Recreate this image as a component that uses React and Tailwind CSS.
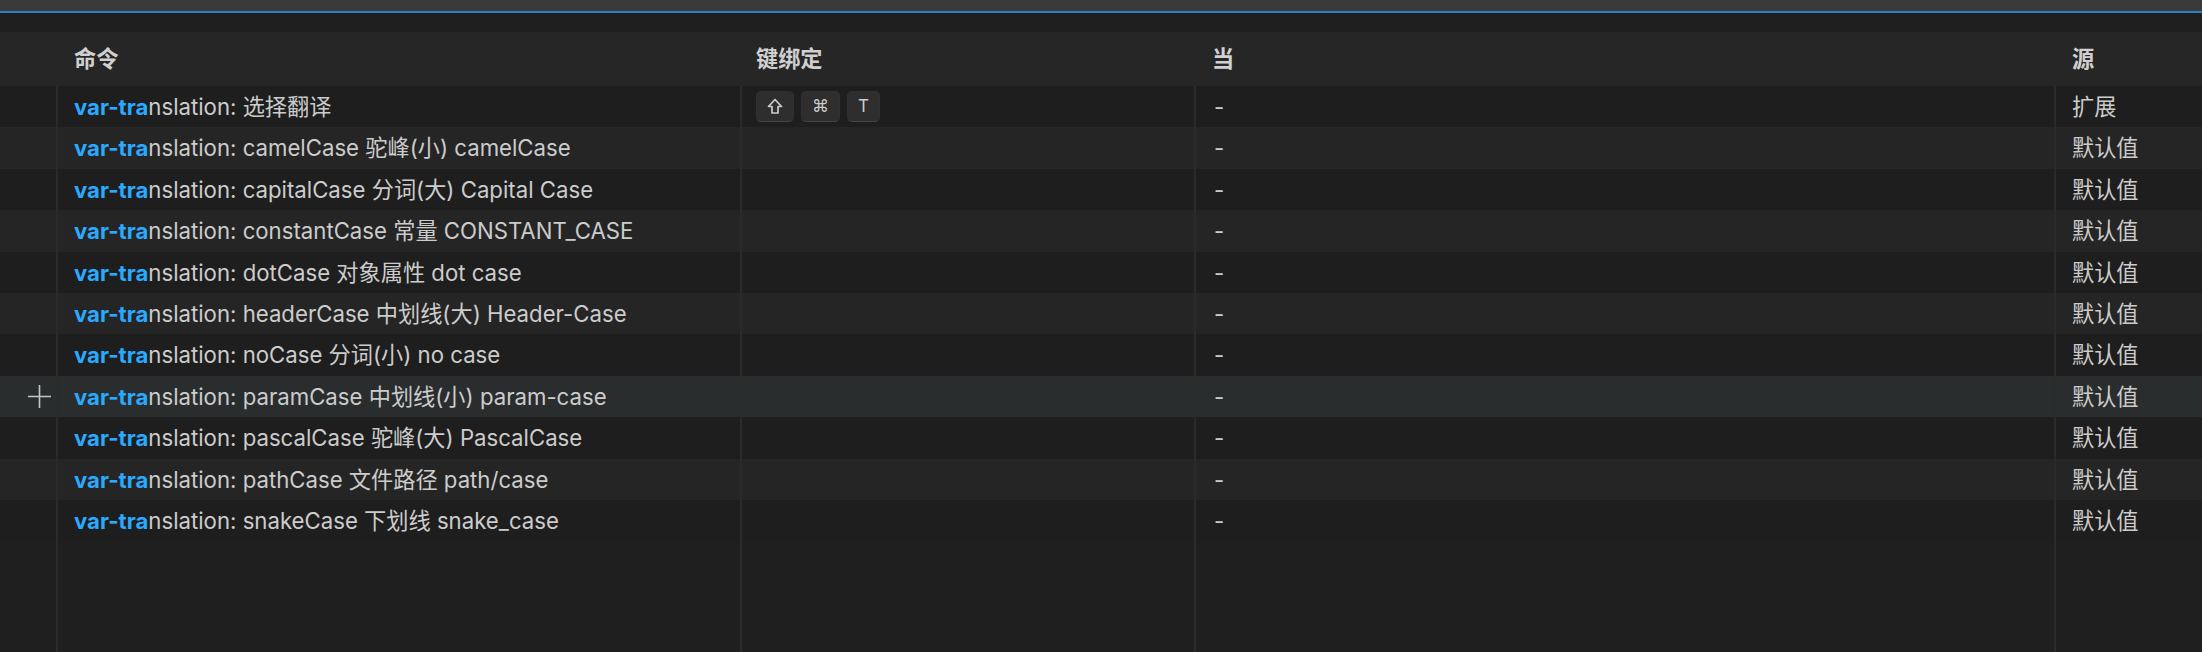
import React from "react";

const rows = [
  { rest: "nslation: 选择翻译", keys: ["shift", "⌘", "T"], source: "扩展" },
  { rest: "nslation: camelCase 驼峰(小) camelCase", source: "默认值" },
  { rest: "nslation: capitalCase 分词(大) Capital Case", source: "默认值" },
  { rest: "nslation: constantCase 常量 CONSTANT_CASE", source: "默认值" },
  { rest: "nslation: dotCase 对象属性 dot case", source: "默认值" },
  { rest: "nslation: headerCase 中划线(大) Header-Case", source: "默认值" },
  { rest: "nslation: noCase 分词(小) no case", source: "默认值" },
  { rest: "nslation: paramCase 中划线(小) param-case", source: "默认值", hover: true },
  { rest: "nslation: pascalCase 驼峰(大) PascalCase", source: "默认值" },
  { rest: "nslation: pathCase 文件路径 path/case", source: "默认值" },
  { rest: "nslation: snakeCase 下划线 snake_case", source: "默认值" },
];

const font = { fontFamily: '"Inter", "Noto Sans CJK SC", sans-serif' };

const ShiftIcon = () => (
  <svg width="16" height="17" viewBox="0 0 16 17" fill="none" stroke="#cccccc" strokeWidth="1.7" strokeLinejoin="round">
    <path d="M8 1.5 1.5 8.5h3.5v6.5h6V8.5h3.5z" />
  </svg>
);

const Key = ({ k }) => (
  <span
    className="flex h-[31px] min-w-[32px] items-center justify-center rounded-[5px] border border-[#33333399] border-b-[#444444] bg-[#2e2e2e] px-[10px] text-[17px] text-[#cccccc]"
    style={{ fontFamily: k === "T" ? '"Inter", sans-serif' : '"DejaVu Sans", sans-serif' }}
  >
    {k === "shift" ? <ShiftIcon /> : k}
  </span>
);

const Cells = ({ first, col1, col2, col3, col4, lines }) => {
  const b = lines ? "border-l-2 border-[#2b2b2b]" : "border-l-2 border-transparent";
  return (
    <>
      <div className="flex w-[56px] shrink-0 items-center justify-center pl-[22px]">{first}</div>
      <div className={`flex w-[684px] shrink-0 items-center pl-[16px] ${b}`}>{col1}</div>
      <div className={`flex w-[454px] shrink-0 items-center gap-[7px] pl-[14px] ${b}`}>{col2}</div>
      <div className={`flex w-[860px] shrink-0 items-center pl-[16px] ${b}`}>{col3}</div>
      <div className={`flex flex-1 items-center pl-[16px] ${b}`}>{col4}</div>
    </>
  );
};

const Plus = () => (
  <svg width="23" height="23" viewBox="0 0 23 23" fill="none" stroke="#c5c5c5" strokeWidth="1.6">
    <path d="M11.5 0v23M0 11.5h23" />
  </svg>
);

export default function App() {
  return (
    <div className="flex h-[652px] w-full flex-col overflow-hidden bg-[#1f1f1f] text-[22.2px] text-[#cccccc]" style={font}>
      <div className="h-[11px] shrink-0 bg-[#3a3a3a]" />
      <div className="h-[1.5px] shrink-0 bg-[#2b7fc4]" />
      <div className="h-[19.5px] shrink-0" />

      {/* header */}
      <div className="flex h-[54px] shrink-0 bg-[#262626] font-bold text-[#d0d0d0]">
        <Cells col1="命令" col2="键绑定" col3="当" col4="源" />
      </div>

      {/* rows */}
      {rows.map((r, i) => (
        <div
          key={i}
          className={`flex h-[41.4px] shrink-0 ${r.hover ? "bg-[#2a2d2e]" : i % 2 ? "bg-[#252525]" : "bg-[#1e1e1e]"}`}
        >
          <Cells
            lines
            first={r.hover ? <Plus /> : null}
            col1={
              <span className="whitespace-nowrap">
                <span className="font-bold text-[#2aaaff]">var-tra</span>
                {r.rest}
              </span>
            }
            col2={r.keys ? r.keys.map((k) => <Key key={k} k={k} />) : null}
            col3={<span className="pl-[2px]">-</span>}
            col4={r.source}
          />
        </div>
      ))}

      {/* empty space below the table */}
      <div className="flex min-h-0 flex-1">
        <Cells lines />
      </div>
    </div>
  );
}
